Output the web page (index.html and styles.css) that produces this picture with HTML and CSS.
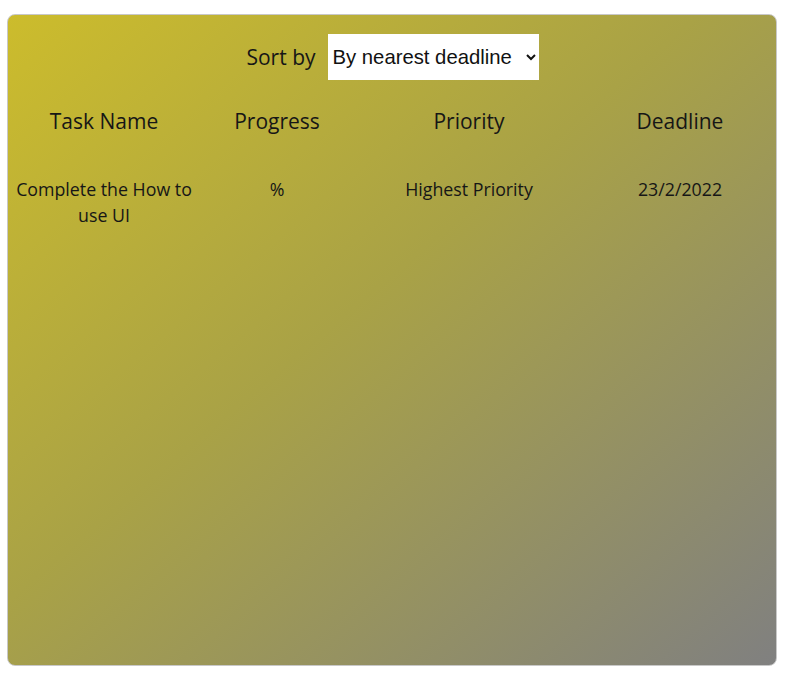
FILE: index.html
```html
<!DOCTYPE html>
<html>
<head>
<meta charset="utf-8">
<link rel="stylesheet" href="styles.css">
</head>
<body>
<div class="card">
  <div class="sort">
    <label class="sort-label">Sort by</label>
    <select class="sort-select">
      <option>By nearest deadline</option>
    </select>
  </div>
  <table class="tasks">
    <thead>
      <tr>
        <th class="c1">Task Name</th>
        <th class="c2">Progress</th>
        <th class="c3">Priority</th>
        <th class="c4">Deadline</th>
      </tr>
    </thead>
    <tbody>
      <tr>
        <td>Complete the How to use UI</td>
        <td>%</td>
        <td>Highest Priority</td>
        <td>23/2/2022</td>
      </tr>
    </tbody>
  </table>
</div>
</body>
</html>
```
FILE: styles.css
```css
html, body { margin: 0; padding: 0; background: #fff; }
body { padding: 14px 8px 9px 7px; }
.card {
  height: 652px;
  border: 1px solid #c8c8c8;
  border-radius: 8px;
  background: linear-gradient(to bottom right, #ccbc2c 0%, #a9a246 45%, #808080 100%);
  font-family: "Open Sans", "Noto Sans", sans-serif;
  color: #161616;
  box-sizing: border-box;
}
.sort {
  display: flex;
  justify-content: center;
  align-items: center;
  gap: 12px;
  padding-top: 19px;
  padding-left: 1px;
}
.sort-label { font-size: 21px; }
.sort-select {
  font-family: "Liberation Sans", Arial, sans-serif;
  font-size: 20.3px;
  height: 46px;
  width: 211px;
  border: none;
  background: #fff;
  color: #111;
  padding: 0 0 0 1px;
}
.tasks {
  width: 100%;
  border-collapse: collapse;
  margin-top: 20px;
  table-layout: fixed;
}
.tasks th {
  font-weight: normal;
  font-size: 21px;
  padding: 6px 4px 2px;
  height: 30px;
}
.tasks .c1 { width: 184px; }
.tasks .c2 { width: 146px; }
.tasks .c3 { width: 222px; }
.tasks td {
  text-align: center;
  vertical-align: top;
  font-size: 17.8px;
  line-height: 26px;
  padding: 38px 4px 0;
}
```
